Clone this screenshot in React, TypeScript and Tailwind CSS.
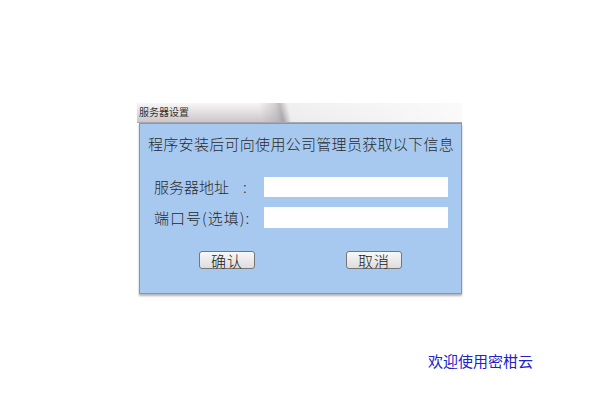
import React from "react";

// Server settings dialog — a small legacy-style form over a white page.

const FONT = "font-['Noto_Sans_CJK_SC','Noto_Sans',sans-serif]";
const LABEL = "text-[15px] leading-5 font-light text-[#2b2b2b]";

function Btn({ children }: { children: React.ReactNode }) {
  return (
    <button
      type="button"
      className="flex h-[18px] w-[56px] items-center justify-center rounded-[3px] border border-[#767676] bg-[linear-gradient(#f8f8f8,#dddddd)] text-[15px] font-light leading-none tracking-[1px] text-[#1a1a1a]"
    >
      {children}
    </button>
  );
}

export default function App() {
  return (
    <div className={`flex h-[400px] w-[600px] flex-col bg-white pl-[137px] pt-[103px] ${FONT}`}>
      <div className="flex w-[325px] flex-col">
        {/* title strip */}
        <div className="relative flex h-[20px] items-start border-b border-[#a8a8ae] bg-[linear-gradient(#f8f7f7,#cdc5c9)]">
          <div className="absolute inset-0 bg-[linear-gradient(78deg,transparent_0%,transparent_38%,rgba(150,146,150,0.35)_43%,rgba(120,120,124,0.45)_44.5%,rgba(240,240,240,0.9)_47%,rgba(250,250,250,1)_100%)]" />
          <span className="relative ml-[2px] mt-[3px] block text-[10px] leading-[12px] text-[#333]">服务器设置</span>
        </div>
        {/* panel */}
        <div className="ml-[2px] flex h-[171px] flex-col border border-[#8796a8] bg-[#a7c9f0] shadow-[0_2px_2px_rgba(0,0,0,0.3)]">
          <p className={`pl-[8px] pt-[10px] tracking-[0.3px] ${LABEL}`}>
            程序安装后可向使用公司管理员获取以下信息
          </p>
          <div className="mt-[23px] flex flex-col gap-[10px] pl-[14px]">
            <div className="flex items-center">
              <div className={`flex w-[110px] items-center ${LABEL}`}>
                <span>服务器地址</span>
                <span className="ml-[14px]">:</span>
              </div>
              <input type="text" className="h-[20px] w-[184px] border-0 bg-white outline-none" />
            </div>
            <div className="flex items-center">
              <div className={`w-[110px] tracking-[1px] ${LABEL}`}>端口号(选填):</div>
              <input type="text" className="h-[21px] w-[184px] border-0 bg-white outline-none" />
            </div>
          </div>
          <div className="mt-[23px] flex gap-[91px] pl-[59px]">
            <Btn>确认</Btn>
            <Btn>取消</Btn>
          </div>
        </div>
      </div>
      <p className="ml-[291px] mt-[57px] text-[15px] leading-5 text-[#2222cc]">欢迎使用密柑云</p>
    </div>
  );
}
